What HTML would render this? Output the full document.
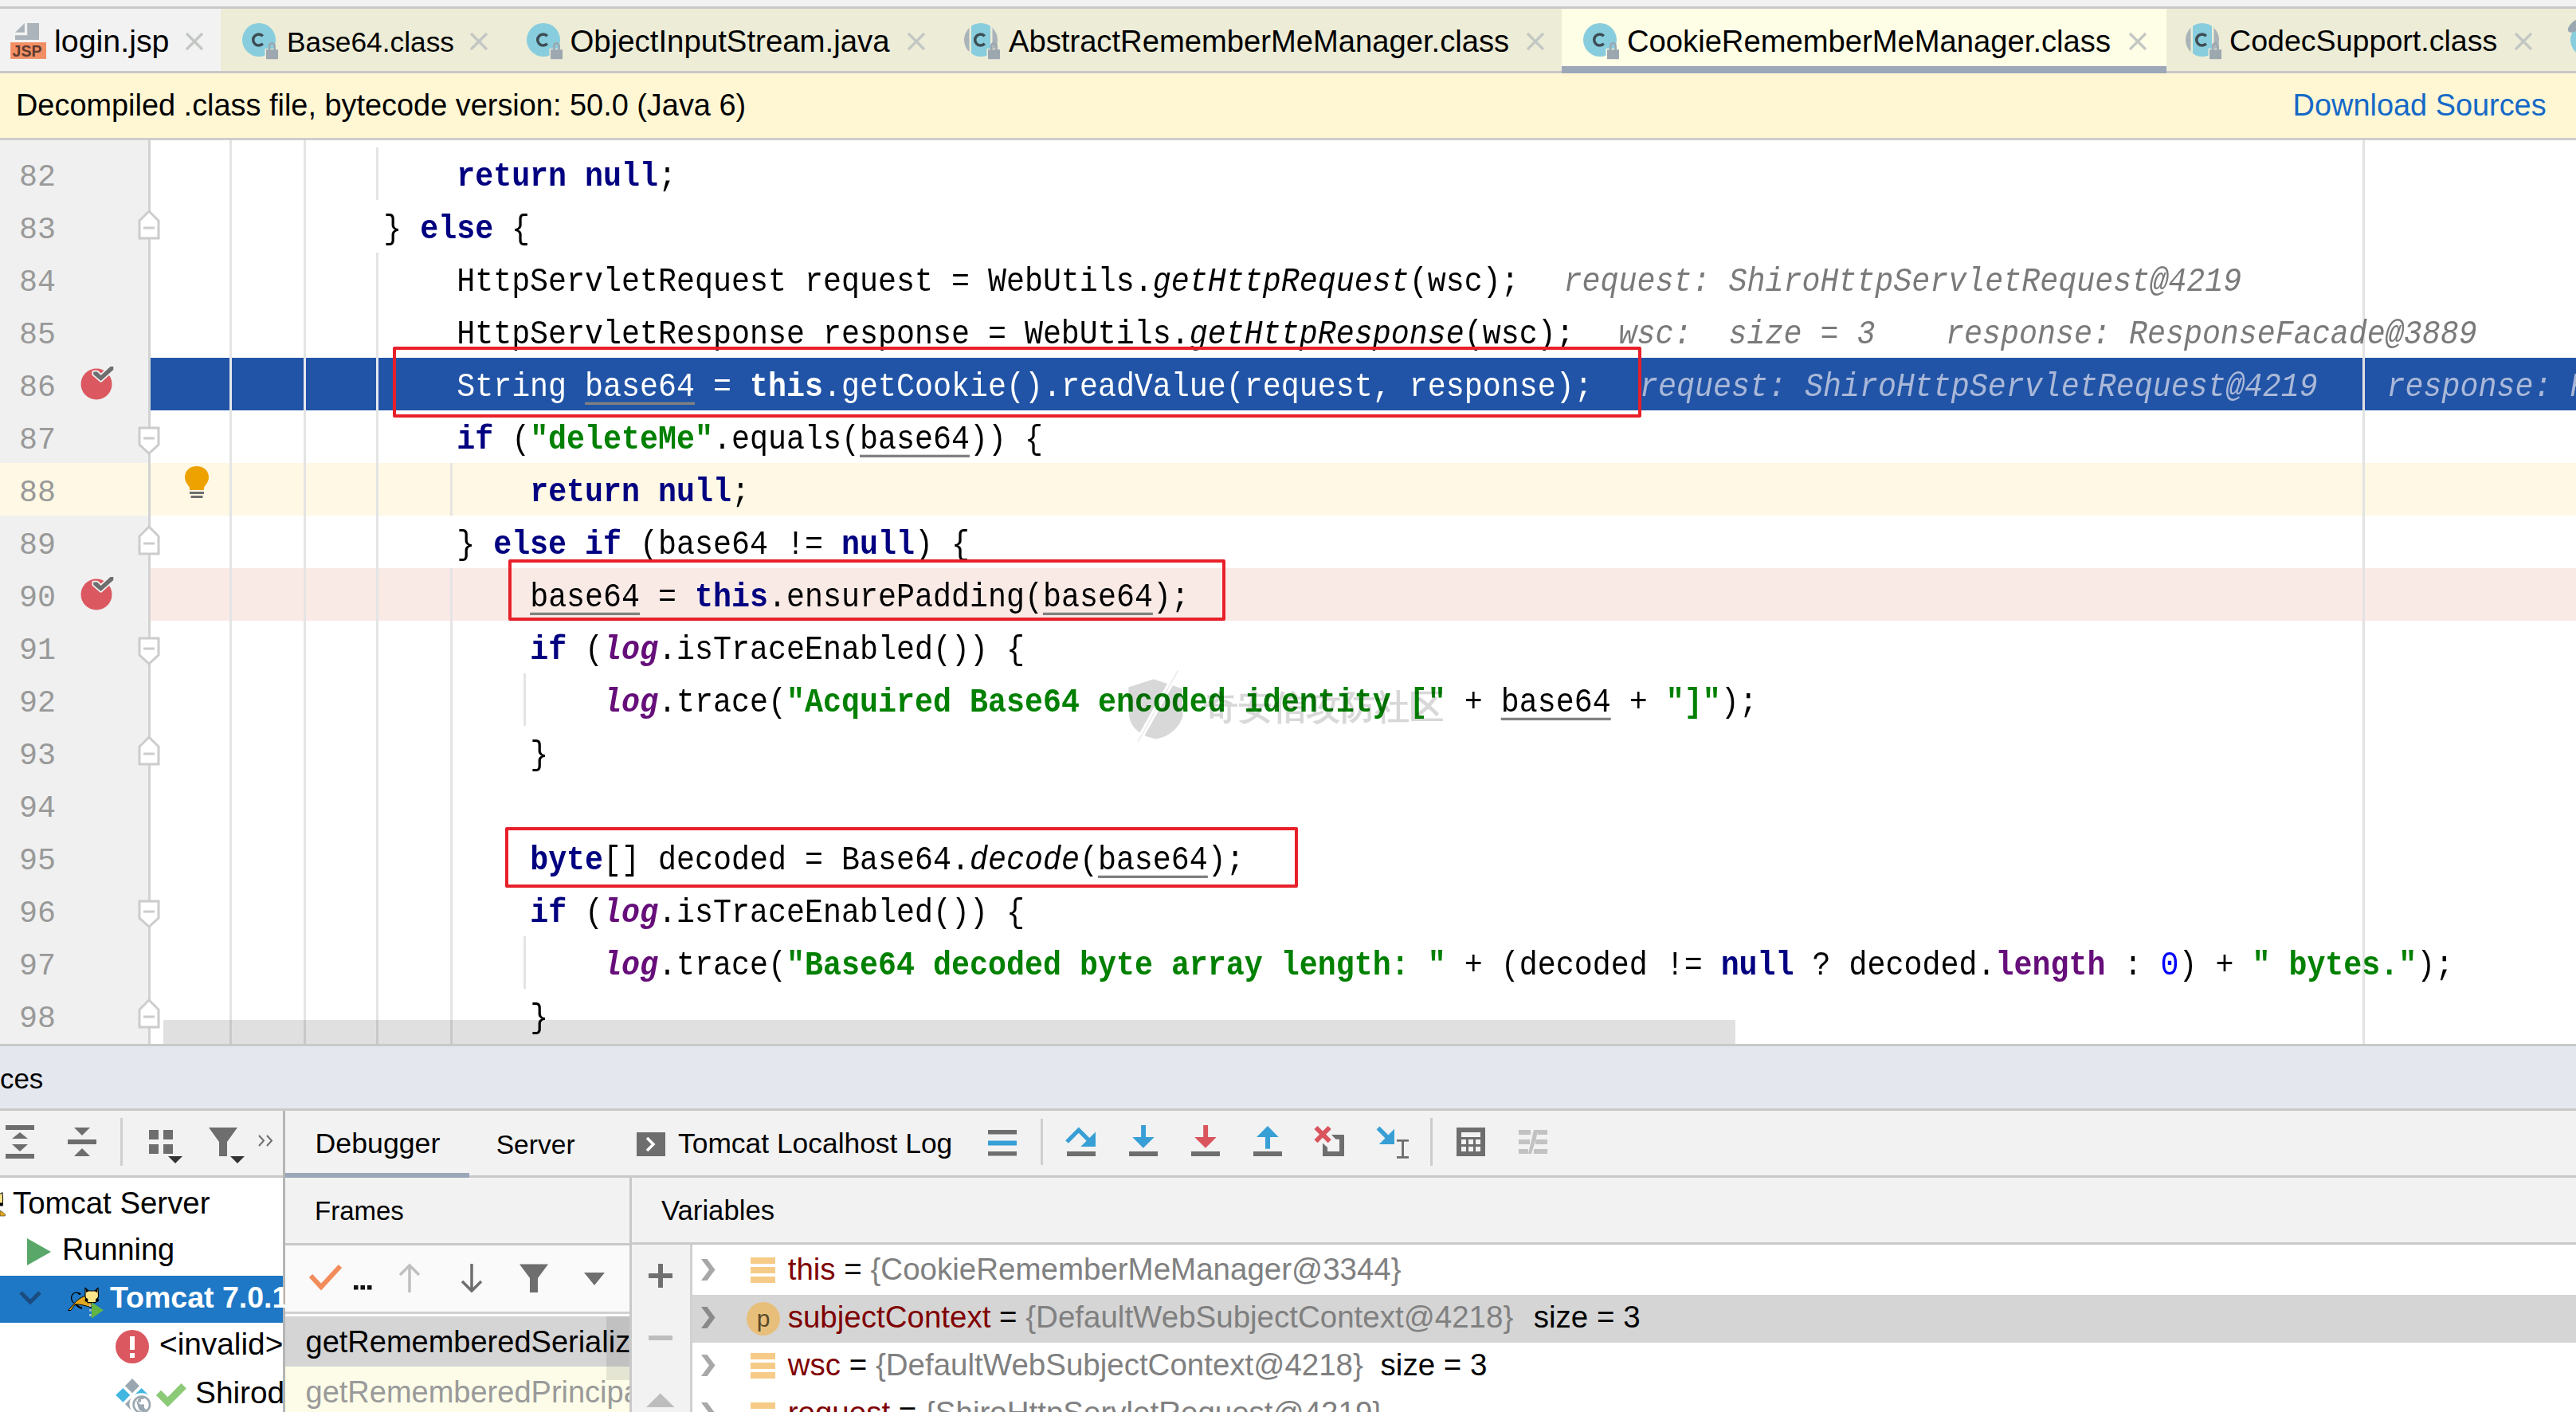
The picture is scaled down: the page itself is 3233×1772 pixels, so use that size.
<!DOCTYPE html>
<html><head><meta charset="utf-8"><title>IDE</title><style>
*{margin:0;padding:0;box-sizing:border-box}
html,body{width:3233px;height:1772px;overflow:hidden;background:#f2f2f2}
body{position:relative;font-family:"Liberation Sans",sans-serif;color:#000}
div,span.a,svg{position:absolute}
.m{font-family:"Liberation Mono",monospace;font-size:38.328px;line-height:66px;white-space:pre;height:66px}
.cl{transform:scaleY(1.1);transform-origin:0 43px}
.k{color:#000080;font-weight:bold}
.s{color:#008000;font-weight:bold}
.p{color:#660e7a;font-weight:bold;font-style:italic}
.i{font-style:italic}
.u{text-decoration:underline;text-decoration-color:#808080;text-underline-offset:7px;text-decoration-thickness:3px}
.n{color:#0000ff}
.h{color:#7a7a7a;font-style:italic}
.hb{color:#aab8d8;font-style:italic}
.ui{white-space:pre;line-height:1}
</style></head>
<body>
<div style="left:0px;top:0px;width:3233px;height:8px;background:#f2f2f2;"></div>
<div style="left:0px;top:8px;width:3233px;height:3px;background:#c8c8c8;"></div>
<div style="left:0px;top:11px;width:3233px;height:78px;background:#ececd7;"></div>
<div style="left:0px;top:11px;width:277px;height:78px;background:#f2f2f2;"></div>
<div style="left:0px;top:89px;width:3233px;height:3px;background:#c8c8c8;"></div>
<div style="left:1960px;top:11px;width:759px;height:72px;background:#fefee6;"></div>
<div style="left:1960px;top:83px;width:759px;height:9px;background:#9ca7b8;"></div>
<svg style="left:0;top:0" width="70" height="90" viewBox="0 0 70 90"><path d="M34.2 29.1 H49 V49.9 H19 V44.25 H34.2 Z" fill="#abb4ba"/><path d="M19 40.85 L30.9 29.1 V40.85 Z" fill="#abb4ba"/><rect x="13.1" y="53.1" width="44.9" height="20.8" fill="#f18e64"/><text x="34" y="70.8" font-family="Liberation Sans" font-weight="bold" font-size="19.5" fill="#5e3b2e" text-anchor="middle">JSP</text></svg>
<div class="ui" style="left:68px;top:31.6px;font-size:39.4px;color:#000;font-weight:normal;">login.jsp</div>
<svg style="left:232px;top:40px" width="24" height="24" viewBox="0 0 24 24"><path d="M2 2L22 22M22 2L2 22" stroke="#c3c7c3" stroke-width="3.2"/></svg>
<svg style="left:301px;top:26px" width="52" height="52" viewBox="0 0 52 52"><circle cx="24" cy="24" r="21" fill="#88cddd"/><path d="M28.8 19.2 A7 7 0 1 0 28.8 28.8" fill="none" stroke="#3e4d54" stroke-width="3.5"/><rect x="31.5" y="35" width="18" height="15" fill="#ececd7"/><rect x="33" y="36.2" width="15" height="12" fill="#9ca7b0"/><path d="M37.2 37 V31.5 a3.2 3.2 0 0 1 6.4 0 V37" fill="none" stroke="#9ca7b0" stroke-width="2.6"/></svg>
<div class="ui" style="left:360px;top:35.1px;font-size:35.3px;color:#000;font-weight:normal;">Base64.class</div>
<svg style="left:589px;top:40px" width="24" height="24" viewBox="0 0 24 24"><path d="M2 2L22 22M22 2L2 22" stroke="#c3c7c3" stroke-width="3.2"/></svg>
<svg style="left:658px;top:26px" width="52" height="52" viewBox="0 0 52 52"><circle cx="24" cy="24" r="21" fill="#88cddd"/><path d="M28.8 19.2 A7 7 0 1 0 28.8 28.8" fill="none" stroke="#3e4d54" stroke-width="3.5"/><rect x="31.5" y="35" width="18" height="15" fill="#ececd7"/><rect x="33" y="36.2" width="15" height="12" fill="#9ca7b0"/><path d="M37.2 37 V31.5 a3.2 3.2 0 0 1 6.4 0 V37" fill="none" stroke="#9ca7b0" stroke-width="2.6"/></svg>
<div class="ui" style="left:715.5px;top:32.5px;font-size:38.4px;color:#000;font-weight:normal;">ObjectInputStream.java</div>
<svg style="left:1138px;top:40px" width="24" height="24" viewBox="0 0 24 24"><path d="M2 2L22 22M22 2L2 22" stroke="#c3c7c3" stroke-width="3.2"/></svg>
<svg style="left:1207px;top:26px" width="52" height="52" viewBox="0 0 52 52"><defs><clipPath id="cc"><circle cx="24" cy="24" r="21"/></clipPath></defs><g clip-path="url(#cc)"><rect x="0" y="0" width="9.5" height="48" fill="#aab3b8"/><rect x="38.5" y="0" width="12" height="48" fill="#aab3b8"/><rect x="12" y="0" width="24" height="48" fill="#88cddd"/></g><path d="M28.8 19.2 A7 7 0 1 0 28.8 28.8" fill="none" stroke="#3e4d54" stroke-width="3.5"/><rect x="31.5" y="35" width="18" height="15" fill="#ececd7"/><rect x="33" y="36.2" width="15" height="12" fill="#9ca7b0"/><path d="M37.2 37 V31.5 a3.2 3.2 0 0 1 6.4 0 V37" fill="none" stroke="#9ca7b0" stroke-width="2.6"/></svg>
<div class="ui" style="left:1266px;top:32.7px;font-size:38.2px;color:#000;font-weight:normal;">AbstractRememberMeManager.class</div>
<svg style="left:1915px;top:40px" width="24" height="24" viewBox="0 0 24 24"><path d="M2 2L22 22M22 2L2 22" stroke="#c3c7c3" stroke-width="3.2"/></svg>
<svg style="left:1984px;top:26px" width="52" height="52" viewBox="0 0 52 52"><circle cx="24" cy="24" r="21" fill="#88cddd"/><path d="M28.8 19.2 A7 7 0 1 0 28.8 28.8" fill="none" stroke="#3e4d54" stroke-width="3.5"/><rect x="31.5" y="35" width="18" height="15" fill="#fefee6"/><rect x="33" y="36.2" width="15" height="12" fill="#9ca7b0"/><path d="M37.2 37 V31.5 a3.2 3.2 0 0 1 6.4 0 V37" fill="none" stroke="#9ca7b0" stroke-width="2.6"/></svg>
<div class="ui" style="left:2042px;top:32.7px;font-size:38.2px;color:#000;font-weight:normal;">CookieRememberMeManager.class</div>
<svg style="left:2671px;top:40px" width="24" height="24" viewBox="0 0 24 24"><path d="M2 2L22 22M22 2L2 22" stroke="#c3c7c3" stroke-width="3.2"/></svg>
<svg style="left:2740px;top:26px" width="52" height="52" viewBox="0 0 52 52"><defs><clipPath id="cc"><circle cx="24" cy="24" r="21"/></clipPath></defs><g clip-path="url(#cc)"><rect x="0" y="0" width="9.5" height="48" fill="#aab3b8"/><rect x="38.5" y="0" width="12" height="48" fill="#aab3b8"/><rect x="12" y="0" width="24" height="48" fill="#88cddd"/></g><path d="M28.8 19.2 A7 7 0 1 0 28.8 28.8" fill="none" stroke="#3e4d54" stroke-width="3.5"/><rect x="31.5" y="35" width="18" height="15" fill="#ececd7"/><rect x="33" y="36.2" width="15" height="12" fill="#9ca7b0"/><path d="M37.2 37 V31.5 a3.2 3.2 0 0 1 6.4 0 V37" fill="none" stroke="#9ca7b0" stroke-width="2.6"/></svg>
<div class="ui" style="left:2798px;top:33.2px;font-size:37.6px;color:#000;font-weight:normal;">CodecSupport.class</div>
<svg style="left:3155px;top:40px" width="24" height="24" viewBox="0 0 24 24"><path d="M2 2L22 22M22 2L2 22" stroke="#c3c7c3" stroke-width="3.2"/></svg>
<svg style="left:3215px;top:20px" width="18" height="50" viewBox="3215 20 18 50"><circle cx="3247" cy="50" r="21" fill="#88cddd"/><ellipse cx="3233" cy="32" rx="12" ry="6" transform="rotate(-38 3233 32)" fill="#9aa7b0"/><path d="M3221 40 C3226 35 3233 33 3240 34" fill="none" stroke="#ececd7" stroke-width="0"/></svg>
<div style="left:0px;top:92px;width:3233px;height:81px;background:#fff7d4;"></div>
<div style="left:0px;top:173px;width:3233px;height:3px;background:#cdcdcd;"></div>
<div class="ui" style="left:20px;top:113.9px;font-size:37.9px;color:#000;font-weight:normal;">Decompiled .class file, bytecode version: 50.0 (Java 6)</div>
<div class="ui" style="left:2877.6px;top:113.9px;font-size:37.9px;color:#1569c7;font-weight:normal;">Download Sources</div>
<div style="left:0px;top:176px;width:3233px;height:1134px;background:#ffffff;"></div>
<div style="left:0px;top:176px;width:187px;height:1134px;background:#f0f0f0;"></div>
<div style="left:0px;top:581px;width:3233px;height:66px;background:#fef8e4;"></div>
<div style="left:189px;top:449px;width:3044px;height:66px;background:#2154a6;"></div>
<div style="left:189px;top:713px;width:3044px;height:66px;background:#faeae6;"></div>
<div style="left:287.5px;top:176px;width:3px;height:1134px;background:#e4e4e4;"></div>
<div style="left:380.5px;top:176px;width:3px;height:1134px;background:#e4e4e4;"></div>
<div style="left:471.5px;top:185px;width:3px;height:66px;background:#e4e4e4;"></div>
<div style="left:471.5px;top:317px;width:3px;height:993px;background:#e4e4e4;"></div>
<div style="left:564.5px;top:581px;width:3px;height:66px;background:#e4e4e4;"></div>
<div style="left:564.5px;top:713px;width:3px;height:597px;background:#e4e4e4;"></div>
<div style="left:656.5px;top:845px;width:3px;height:66px;background:#e4e4e4;"></div>
<div style="left:656.5px;top:1175px;width:3px;height:66px;background:#e4e4e4;"></div>
<div style="left:2965px;top:176px;width:3px;height:1134px;background:#e2e2e2;"></div>
<div style="left:186px;top:176px;width:3px;height:1134px;background:#d2d2d2;"></div>
<div class="m" style="left:24px;top:189.8px;color:#999999;width:46px;text-align:right">82</div>
<div class="m" style="left:24px;top:255.8px;color:#999999;width:46px;text-align:right">83</div>
<div class="m" style="left:24px;top:321.8px;color:#999999;width:46px;text-align:right">84</div>
<div class="m" style="left:24px;top:387.8px;color:#999999;width:46px;text-align:right">85</div>
<div class="m" style="left:24px;top:453.8px;color:#999999;width:46px;text-align:right">86</div>
<div class="m" style="left:24px;top:519.8px;color:#999999;width:46px;text-align:right">87</div>
<div class="m" style="left:24px;top:585.8px;color:#999999;width:46px;text-align:right">88</div>
<div class="m" style="left:24px;top:651.8px;color:#999999;width:46px;text-align:right">89</div>
<div class="m" style="left:24px;top:717.8px;color:#999999;width:46px;text-align:right">90</div>
<div class="m" style="left:24px;top:783.8px;color:#999999;width:46px;text-align:right">91</div>
<div class="m" style="left:24px;top:849.8px;color:#999999;width:46px;text-align:right">92</div>
<div class="m" style="left:24px;top:915.8px;color:#999999;width:46px;text-align:right">93</div>
<div class="m" style="left:24px;top:981.8px;color:#999999;width:46px;text-align:right">94</div>
<div class="m" style="left:24px;top:1047.8px;color:#999999;width:46px;text-align:right">95</div>
<div class="m" style="left:24px;top:1113.8px;color:#999999;width:46px;text-align:right">96</div>
<div class="m" style="left:24px;top:1179.8px;color:#999999;width:46px;text-align:right">97</div>
<div class="m" style="left:24px;top:1245.8px;color:#999999;width:46px;text-align:right">98</div>
<svg style="left:0;top:0;width:3233px;height:1772px;pointer-events:none" width="3233" height="1772"><path d="M187 265.0 L199 277.0 V299.0 H175 V277.0 Z" fill="#ffffff" stroke="#cccccc" stroke-width="3"/><rect x="180" y="284.5" width="14" height="3" fill="#cccccc"/></svg>
<svg style="left:0;top:0;width:3233px;height:1772px;pointer-events:none" width="3233" height="1772"><path d="M175 537.0 H199 V558.0 L187 569.0 L175 558.0 Z" fill="#ffffff" stroke="#cccccc" stroke-width="3"/><rect x="180" y="548.5" width="14" height="3" fill="#cccccc"/></svg>
<svg style="left:0;top:0;width:3233px;height:1772px;pointer-events:none" width="3233" height="1772"><path d="M187 661.0 L199 673.0 V695.0 H175 V673.0 Z" fill="#ffffff" stroke="#cccccc" stroke-width="3"/><rect x="180" y="680.5" width="14" height="3" fill="#cccccc"/></svg>
<svg style="left:0;top:0;width:3233px;height:1772px;pointer-events:none" width="3233" height="1772"><path d="M175 801.0 H199 V822.0 L187 833.0 L175 822.0 Z" fill="#ffffff" stroke="#cccccc" stroke-width="3"/><rect x="180" y="812.5" width="14" height="3" fill="#cccccc"/></svg>
<svg style="left:0;top:0;width:3233px;height:1772px;pointer-events:none" width="3233" height="1772"><path d="M187 925.0 L199 937.0 V959.0 H175 V937.0 Z" fill="#ffffff" stroke="#cccccc" stroke-width="3"/><rect x="180" y="944.5" width="14" height="3" fill="#cccccc"/></svg>
<svg style="left:0;top:0;width:3233px;height:1772px;pointer-events:none" width="3233" height="1772"><path d="M175 1131.0 H199 V1152.0 L187 1163.0 L175 1152.0 Z" fill="#ffffff" stroke="#cccccc" stroke-width="3"/><rect x="180" y="1142.5" width="14" height="3" fill="#cccccc"/></svg>
<svg style="left:0;top:0;width:3233px;height:1772px;pointer-events:none" width="3233" height="1772"><path d="M187 1255.0 L199 1267.0 V1289.0 H175 V1267.0 Z" fill="#ffffff" stroke="#cccccc" stroke-width="3"/><rect x="180" y="1274.5" width="14" height="3" fill="#cccccc"/></svg>
<svg style="left:96px;top:455px" width="52" height="52" viewBox="0 0 52 52"><circle cx="25" cy="27" r="19.5" fill="#db5860"/><path d="M21.2 11.5 H26 L30.6 16 L42.5 5 H46.3 V9 L30.6 23 L21.2 15Z" fill="#6e6e6e" stroke="#f3f3f3" stroke-width="3.5" stroke-linejoin="round"/><path d="M21.2 11.5 H26 L30.6 16 L42.5 5 H46.3 V9 L30.6 23 L21.2 15Z" fill="#6e6e6e"/></svg>
<svg style="left:96px;top:719px" width="52" height="52" viewBox="0 0 52 52"><circle cx="25" cy="27" r="19.5" fill="#db5860"/><path d="M21.2 11.5 H26 L30.6 16 L42.5 5 H46.3 V9 L30.6 23 L21.2 15Z" fill="#6e6e6e" stroke="#f3f3f3" stroke-width="3.5" stroke-linejoin="round"/><path d="M21.2 11.5 H26 L30.6 16 L42.5 5 H46.3 V9 L30.6 23 L21.2 15Z" fill="#6e6e6e"/></svg>
<svg style="left:231px;top:584px" width="34" height="46" viewBox="0 0 34 46"><path d="M16 1 C7 1 1 7 1 15 C1 21 5 24 7 28 V31 H25 V28 C27 24 31 21 31 15 C31 7 25 1 16 1Z" fill="#eda200"/><rect x="7" y="33" width="18" height="3" fill="#6e6e6e"/><rect x="8.5" y="38" width="15" height="3" fill="#6e6e6e"/></svg>
<div class="m cl" style="left:573.16px;top:189.8px;color:#000"><span class="k">return</span> <span class="k">null</span>;</div>
<div class="m cl" style="left:481.18px;top:255.8px;color:#000">} <span class="k">else</span> {</div>
<div class="m cl" style="left:573.16px;top:321.8px;color:#000">HttpServletRequest request = WebUtils.<span class="i">getHttpRequest</span>(wsc);</div>
<div class="m cl h" style="left:1962.5px;top:321.8px">request: ShiroHttpServletRequest@4219</div>
<div class="m cl" style="left:573.16px;top:387.8px;color:#000">HttpServletResponse response = WebUtils.<span class="i">getHttpResponse</span>(wsc);</div>
<div class="m cl h" style="left:2031.5px;top:387.8px">wsc:  size = 3</div>
<div class="m cl h" style="left:2442px;top:387.8px">response: ResponseFacade@3889</div>
<div class="m cl" style="left:573.16px;top:453.8px;color:#ffffff">String <span class="u">base64</span> = <span style="font-weight:bold">this</span>.getCookie().readValue(request, response);</div>
<div class="m cl hb" style="left:2058px;top:453.8px">request: ShiroHttpServletRequest@4219</div>
<div class="m cl hb" style="left:2995.5px;top:453.8px">response: ResponseFacade@3889</div>
<div class="m cl" style="left:573.16px;top:519.8px;color:#000"><span class="k">if</span> (<span class="s">"deleteMe"</span>.equals(<span class="u">base64</span>)) {</div>
<div class="m cl" style="left:665.15px;top:585.8px;color:#000"><span class="k">return</span> <span class="k">null</span>;</div>
<div class="m cl" style="left:573.16px;top:651.8px;color:#000">} <span class="k">else</span> <span class="k">if</span> (<span class="u">base64</span> != <span class="k">null</span>) {</div>
<div class="m cl" style="left:665.15px;top:717.8px;color:#000"><span class="u">base64</span> = <span class="k">this</span>.ensurePadding(<span class="u">base64</span>);</div>
<div class="m cl" style="left:665.15px;top:783.8px;color:#000"><span class="k">if</span> (<span class="p">log</span>.isTraceEnabled()) {</div>
<div class="m cl" style="left:757.14px;top:849.8px;color:#000"><span class="p">log</span>.trace(<span class="s">"Acquired Base64 encoded identity ["</span> + <span class="u">base64</span> + <span class="s">"]"</span>);</div>
<div class="m cl" style="left:665.15px;top:915.8px;color:#000">}</div>
<div class="m cl" style="left:665.15px;top:1047.8px;color:#000"><span class="k">byte</span>[] decoded = Base64.<span class="i">decode</span>(<span class="u">base64</span>);</div>
<div class="m cl" style="left:665.15px;top:1113.8px;color:#000"><span class="k">if</span> (<span class="p">log</span>.isTraceEnabled()) {</div>
<div class="m cl" style="left:757.14px;top:1179.8px;color:#000"><span class="p">log</span>.trace(<span class="s">"Base64 decoded byte array length: "</span> + (decoded != <span class="k">null</span> ? decoded.<span class="p" style="font-style:normal">length</span> : <span class="n">0</span>) + <span class="s">" bytes."</span>);</div>
<div class="m cl" style="left:665.15px;top:1245.8px;color:#000">}</div>
<div style="left:287.5px;top:449px;width:3px;height:66px;background:#e6e8ee;"></div>
<div style="left:380.5px;top:449px;width:3px;height:66px;background:#e6e8ee;"></div>
<div style="left:471.5px;top:449px;width:3px;height:66px;background:#e6e8ee;"></div>
<div style="left:2965px;top:449px;width:3px;height:66px;background:#e2e2e2;"></div>
<svg style="left:1405px;top:835px" width="430" height="110" viewBox="0 0 430 110"><defs><mask id="wm"><rect width="430" height="110" fill="#fff"/><path d="M73.6 6.1 L23.2 95.8" stroke="#000" stroke-width="7"/></mask></defs><path d="M11.2 27.5 L42.8 17.2 L78.7 29.2 L79.5 63.3 C75 80 60 90 46.2 92.4 C30 90 14 80 12.1 63.3Z" fill="#000" opacity="0.15" mask="url(#wm)"/><path d="M73.6 6.1 L23.2 95.8" stroke="#000" stroke-width="1.5" opacity="0.08"/><text x="106" y="67" font-size="43" font-weight="bold" fill="#000" opacity="0.15">&#22855;&#23433;&#20449;&#25915;&#38450;&#31038;&#21306;</text></svg>
<div style="left:492.5px;top:435px;width:1567.5px;height:88.5px;border:4px solid #e8202a;border-radius:2px"></div>
<div style="left:638px;top:702px;width:900px;height:77px;border:4px solid #e8202a;border-radius:2px"></div>
<div style="left:633.5px;top:1037.5px;width:995.5px;height:76.5px;border:4px solid #e8202a;border-radius:2px"></div>
<div style="left:205px;top:1280px;width:1973px;height:30px;background:rgba(0,0,0,0.12);"></div>
<div style="left:0px;top:1310px;width:3233px;height:3px;background:#c9c9c9;"></div>
<div style="left:0px;top:1313px;width:3233px;height:78px;background:#e4e7ee;"></div>
<div class="ui" style="left:0px;top:1336.5px;font-size:34.9px;color:#000;font-weight:normal;">ces</div>
<div style="left:0px;top:1391px;width:3233px;height:3px;background:#c9c9c9;"></div>
<div style="left:0px;top:1394px;width:3233px;height:81px;background:#f2f2f2;"></div>
<div style="left:0px;top:1475px;width:3233px;height:3px;background:#c9c9c9;"></div>
<svg style="left:0;top:1394px" width="356" height="81" viewBox="0 1394 356 81"><rect x="7" y="1412" width="36" height="6" fill="#6e6e6e"/><rect x="7" y="1448" width="36" height="6" fill="#6e6e6e"/><path d="M25 1421 L35 1429 H15Z" fill="#6e6e6e"/><path d="M25 1445 L35 1436 H15Z" fill="#6e6e6e"/><rect x="85" y="1430" width="36" height="6" fill="#6e6e6e"/><path d="M93 1415 H113 L103 1425Z" fill="#6e6e6e"/><path d="M93 1451 H113 L103 1441Z" fill="#6e6e6e"/><rect x="151" y="1403" width="3" height="60" fill="#cfcfcf"/><rect x="187" y="1418" width="12" height="12" fill="#6e6e6e"/><rect x="205" y="1418" width="12" height="12" fill="#6e6e6e"/><rect x="187" y="1436" width="12" height="12" fill="#6e6e6e"/><rect x="205" y="1436" width="12" height="12" fill="#6e6e6e"/><path d="M211 1451 H229 L220 1460Z" fill="#333"/><path d="M262 1415 H298 L285 1433 V1451 H275 V1433Z" fill="#6e6e6e"/><path d="M289 1451 H307 L298 1460Z" fill="#333"/><path d="M325 1425 L331 1431.5 L325 1438 M335 1425 L341 1431.5 L335 1438" fill="none" stroke="#6e6e6e" stroke-width="2"/></svg>
<div style="left:355px;top:1394px;width:3px;height:378px;background:#b5b5b5;"></div>
<div class="ui" style="left:395.6px;top:1417.8px;font-size:35.7px;color:#000;font-weight:normal;">Debugger</div>
<div style="left:358px;top:1472px;width:231px;height:6px;background:#9aa7b9;"></div>
<div class="ui" style="left:622.7px;top:1419.6px;font-size:33.6px;color:#000;font-weight:normal;">Server</div>
<svg style="left:799px;top:1421px" width="36" height="30" viewBox="0 0 36 30"><rect width="36" height="30" fill="#6e6e6e"/><path d="M13 7 L21 15 L13 23" fill="none" stroke="#fff" stroke-width="3.5"/></svg>
<div class="ui" style="left:851px;top:1418.0px;font-size:35.4px;color:#000;font-weight:normal;">Tomcat Localhost Log</div>
<svg style="left:1230px;top:1394px" width="730" height="81" viewBox="1230 1394 730 81"><rect x="1240" y="1418" width="36" height="5.5" fill="#6e6e6e"/><rect x="1240" y="1431.5" width="36" height="6" fill="#389fd6"/><rect x="1240" y="1445" width="36" height="5.5" fill="#6e6e6e"/><rect x="1306" y="1404" width="3" height="58" fill="#cfcfcf"/><rect x="1339" y="1445" width="36" height="6" fill="#6e6e6e"/><path d="M1339 1433 L1353.8 1418.2 L1366 1430.4" fill="none" stroke="#389fd6" stroke-width="5.2"/><path d="M1375 1420.4 V1439 H1356.3Z" fill="#389fd6"/><rect x="1417" y="1445" width="36" height="6" fill="#6e6e6e"/><rect x="1432.1" y="1412" width="5.9" height="16" fill="#389fd6"/><path d="M1421.1 1427 H1448.7 L1434.9 1440.8Z" fill="#389fd6"/><rect x="1495" y="1445" width="36" height="6" fill="#6e6e6e"/><rect x="1510.2" y="1412" width="5.9" height="16" fill="#d9545d"/><path d="M1499.1 1427 H1526.7 L1513 1440.8Z" fill="#d9545d"/><rect x="1573" y="1445" width="36" height="6" fill="#6e6e6e"/><rect x="1588" y="1426" width="6" height="15.7" fill="#389fd6"/><path d="M1577.1 1427 H1604.7 L1591 1413Z" fill="#389fd6"/><path d="M1671 1424 H1687 V1451 H1660 V1434.6 L1666.1 1440 V1445 H1681 V1429.7 H1676.5Z" fill="#6e6e6e"/><path d="M1651.5 1415 L1668.7 1432.2 M1668.7 1415 L1651.5 1432.2" stroke="#d9545d" stroke-width="5.8"/><path d="M1729.5 1415.5 L1742 1428" stroke="#389fd6" stroke-width="5.5"/><path d="M1750 1416.7 V1436.1 H1730.8Z" fill="#389fd6"/><rect x="1753" y="1430" width="15" height="2.7" fill="#6e6e6e"/><rect x="1753" y="1451" width="15" height="2.8" fill="#6e6e6e"/><rect x="1759.1" y="1430" width="2.9" height="23" fill="#6e6e6e"/><rect x="1795" y="1403" width="3" height="60" fill="#cccccc"/><rect x="1828" y="1415" width="36" height="36" fill="#6e6e6e"/><rect x="1834" y="1421" width="24" height="6" fill="#f2f2f2"/><rect x="1834" y="1430" width="6" height="6" fill="#f2f2f2"/><rect x="1843" y="1430" width="6" height="6" fill="#f2f2f2"/><rect x="1852" y="1430" width="6" height="6" fill="#f2f2f2"/><rect x="1834" y="1439" width="6" height="6" fill="#f2f2f2"/><rect x="1843" y="1439" width="6" height="6" fill="#f2f2f2"/><rect x="1852" y="1439" width="6" height="6" fill="#f2f2f2"/><g fill="#c2c2c2"><rect x="1906" y="1418" width="15" height="6"/><rect x="1906" y="1430" width="14" height="6"/><rect x="1906" y="1442" width="12" height="6"/><rect x="1930" y="1418" width="12" height="6"/><rect x="1927" y="1430" width="15" height="6"/><rect x="1925" y="1442" width="17" height="6"/><path d="M1925 1418 H1931 L1922 1448 H1918Z"/></g></svg>
<div style="left:0px;top:1478px;width:355px;height:294px;background:#ffffff;"></div>
<svg style="left:0;top:1490px" width="12" height="40" viewBox="0 0 12 40"><path d="M-1 9 L3 6.5 L3.6 15 L3.2 21 H-1Z" fill="#fde68a" stroke="#000" stroke-width="1"/><rect x="0" y="19.5" width="3.8" height="4" fill="#000"/><path d="M0 29.5 L2 30 L6.8 34 L6.2 36 H0Z" fill="#e0a820" stroke="#333" stroke-width="0.6"/></svg>
<div class="ui" style="left:16px;top:1490.5px;font-size:38.4px;color:#000;font-weight:normal;">Tomcat Server</div>
<svg style="left:34px;top:1554px" width="32" height="34" viewBox="0 0 32 34"><path d="M0 0 L30 17 L0 34Z" fill="#59a869"/></svg>
<div class="ui" style="left:78px;top:1549.9px;font-size:37.9px;color:#000;font-weight:normal;">Running</div>
<div style="left:0px;top:1601px;width:355px;height:59px;background:#1f78c5;"></div>
<svg style="left:24px;top:1620px" width="28" height="18" viewBox="0 0 28 18"><path d="M2 2 L14 14 L26 2" fill="none" stroke="#1b4c80" stroke-width="5"/></svg>
<svg style="left:80px;top:1605px" width="60" height="55" viewBox="0 0 60 55"><path d="M12.5 30 C8 26 9 19 14 17.5 C17 16.5 20 18 21.5 19" fill="none" stroke="#000" stroke-width="1.3"/><path d="M17 17.5 L22 19 L19 20Z" fill="#000"/><path d="M5.5 39.5 L13 31 C18 25 24 22 28 21 L35 30 L34.5 36 C28 33.5 20 31.5 14 32 L9 39.5Z" fill="#e0a820" stroke="#000" stroke-width="1"/><path d="M15 32 C17 34 20 36 23 37" fill="none" stroke="#000" stroke-width="2.2"/><path d="M27 11.5 L31 15 H39 L43 11.5 L43.6 22 L40 29.6 H30 L26.9 22Z" fill="#fde68a" stroke="#000" stroke-width="1.2"/><path d="M27.5 12 L31 15.5 L28 17Z M42.5 12 L39 15.5 L42 17Z" fill="#000"/><ellipse cx="28.5" cy="26.5" rx="2" ry="2.2" fill="#000"/><ellipse cx="42" cy="26.5" rx="2" ry="2.2" fill="#000"/><rect x="32" y="32.3" width="2.7" height="2.4" fill="#b7c3d0"/><rect x="32" y="38.2" width="2.7" height="2.4" fill="#b7c3d0"/><rect x="32" y="44" width="2.7" height="2.6" fill="#b7c3d0"/><path d="M35 29.2 V49.5 L49.9 39.3Z" fill="#62b543"/></svg>
<div class="ui" style="left:138px;top:1610.3px;font-size:37.5px;color:#ffffff;font-weight:bold;">Tomcat 7.0.1</div>
<svg style="left:145px;top:1669px" width="42" height="42" viewBox="0 0 42 42"><circle cx="21" cy="21" r="21" fill="#db5860"/><rect x="18" y="8" width="6" height="17" fill="#fff"/><rect x="18" y="29" width="6" height="6" fill="#fff"/></svg>
<div class="ui" style="left:200px;top:1668.2px;font-size:38.8px;color:#000;font-weight:normal;">&lt;invalid&gt;</div>
<svg style="left:140px;top:1720px" width="100" height="52" viewBox="0 0 100 52"><path d="M26 10.1 L34.9 19.2 L26 28.3 L16.9 19.2Z" fill="#9aa7b0"/><path d="M14.4 21.9 L23.3 30.7 L14.4 39.8 L5.2 30.7Z" fill="#40b6e0"/><path d="M37.6 21.9 L46.5 30.7 C41 27.5 34 27.5 28.8 30.7Z" fill="#40b6e0"/><path d="M25.5 33.5 L17 42 L25.5 51 C21.5 46 21.5 38 25.5 33.5Z" fill="#9aa7b0"/><circle cx="37.8" cy="42.7" r="10.2" fill="none" stroke="#9aa7b0" stroke-width="2.6"/><path d="M31 37 L36 42.5 H41 V47 L44 49 L40 52 L35 50 L33 45Z M41.5 33.5 L40 36 H37 V39.5 H33 V36.5 L36 33.5Z" fill="#9aa7b0"/><path d="M55.9 31 L62.1 24.8 L70.5 33.2 L87.5 16.1 L93.9 22.5 L70.5 45.8Z" fill="#8dca77"/></svg>
<div class="ui" style="left:245px;top:1729.2px;font-size:38.8px;color:#000;font-weight:normal;">Shirod</div>
<div style="left:358px;top:1478px;width:433px;height:82px;background:#f2f2f2;"></div>
<div class="ui" style="left:395px;top:1502.7px;font-size:33px;color:#000;font-weight:normal;">Frames</div>
<div style="left:358px;top:1560px;width:433px;height:3px;background:#c9c9c9;"></div>
<div style="left:358px;top:1563px;width:433px;height:83px;background:#fafafa;"></div>
<svg style="left:358px;top:1563px" width="433" height="84" viewBox="358 1563 433 84"><path d="M390 1601 L403 1615 L427 1589" fill="none" stroke="#f28c5b" stroke-width="6"/><rect x="444" y="1613" width="5.5" height="5.5" fill="#111"/><rect x="452.5" y="1613" width="5.5" height="5.5" fill="#111"/><rect x="461" y="1613" width="5.5" height="5.5" fill="#111"/><path d="M514 1622 V1589 M502 1600 L514 1588 L526 1600" fill="none" stroke="#c0c0c0" stroke-width="3.5"/><path d="M592 1586 V1619 M580 1608 L592 1620 L604 1608" fill="none" stroke="#6e6e6e" stroke-width="3.5"/><path d="M652 1586.5 H688 L675 1604 V1622 H665 V1604Z" fill="#6e6e6e"/><path d="M733 1597 H759 L746 1613Z" fill="#6e6e6e"/></svg>
<div style="left:358px;top:1646px;width:433px;height:3px;background:#d0d0d0;"></div>
<div style="left:358px;top:1649px;width:433px;height:3px;background:#ffffff;"></div>
<div style="left:358px;top:1652px;width:433px;height:62.5px;background:#d5d5d5;"></div>
<div style="left:358px;top:1714.5px;width:433px;height:58px;background:#fcfce8;"></div>
<div style="left:358px;top:1650px;width:432px;height:122px;overflow:hidden"><div class="ui" style="left:25.5px;top:14.8px;font-size:38px">getRememberedSerializedIdentity</div><div class="ui" style="left:25.5px;top:77.8px;font-size:38px;color:#9a9a9a">getRememberedPrincipals</div></div>
<div style="left:761px;top:1652px;width:29px;height:80px;background:rgba(0,0,0,0.09);"></div>
<div style="left:790px;top:1478px;width:3px;height:294px;background:#c9c9c9;"></div>
<div style="left:793px;top:1478px;width:2440px;height:82px;background:#f2f2f2;"></div>
<div class="ui" style="left:830px;top:1502.1px;font-size:34.7px;color:#000;font-weight:normal;">Variables</div>
<div style="left:793px;top:1559px;width:2440px;height:3px;background:#c9c9c9;"></div>
<div style="left:793px;top:1562px;width:73px;height:210px;background:#f2f2f2;"></div>
<svg style="left:793px;top:1562px" width="73" height="210" viewBox="793 1562 73 210"><rect x="814" y="1598" width="30" height="6" fill="#707070"/><rect x="826" y="1586" width="6" height="30" fill="#707070"/><rect x="814" y="1676" width="30" height="6" fill="#bdbdbd"/><path d="M811 1766 L828.7 1748.4 L846.5 1766Z" fill="#bdbdbd"/></svg>
<div style="left:866px;top:1562px;width:3px;height:210px;background:#d0d0d0;"></div>
<div style="left:869px;top:1562px;width:2364px;height:210px;background:#ffffff;"></div>
<div style="left:869px;top:1625px;width:2364px;height:60px;background:#d5d5d5;"></div>
<svg style="left:880px;top:1580px" width="18" height="28" viewBox="0 0 18 28"><path d="M0 0 H7.5 L17.5 13.5 L7.5 27 H0 L10 13.5Z" fill="#a8a8a8"/></svg>
<svg style="left:942px;top:1578px" width="32" height="34" viewBox="0 0 32 34"><rect x="0" y="0" width="31" height="8" fill="#f6cb88"/><rect x="0" y="12" width="31" height="8" fill="#f6cb88"/><rect x="0" y="24" width="31" height="8" fill="#f6cb88"/></svg>
<div class="ui" style="left:988.7px;top:1574.4px;font-size:38.5px"><span style="color:#7f0000">this</span> = <span style="color:#808080">{CookieRememberMeManager@3344}</span></div>
<svg style="left:880px;top:1640px" width="18" height="28" viewBox="0 0 18 28"><path d="M0 0 H7.5 L17.5 13.5 L7.5 27 H0 L10 13.5Z" fill="#8a8a8a"/></svg>
<svg style="left:937px;top:1634px" width="42" height="42" viewBox="0 0 42 42"><circle cx="21" cy="21" r="21" fill="#e8bf7a"/><text x="21" y="31" font-family="Liberation Sans" font-size="30" fill="#5a4a2a" text-anchor="middle">p</text></svg>
<div class="ui" style="left:988.7px;top:1634.4px;font-size:38.5px"><span style="color:#7f0000">subjectContext</span> = <span style="color:#808080">{DefaultWebSubjectContext@4218}</span></div>
<div class="ui" style="left:1924.8px;top:1634.4px;font-size:38.5px">size = 3</div>
<svg style="left:880px;top:1700px" width="18" height="28" viewBox="0 0 18 28"><path d="M0 0 H7.5 L17.5 13.5 L7.5 27 H0 L10 13.5Z" fill="#a8a8a8"/></svg>
<svg style="left:942px;top:1698px" width="32" height="34" viewBox="0 0 32 34"><rect x="0" y="0" width="31" height="8" fill="#f6cb88"/><rect x="0" y="12" width="31" height="8" fill="#f6cb88"/><rect x="0" y="24" width="31" height="8" fill="#f6cb88"/></svg>
<div class="ui" style="left:988.7px;top:1694.4px;font-size:38.5px"><span style="color:#7f0000">wsc</span> = <span style="color:#808080">{DefaultWebSubjectContext@4218}</span></div>
<div class="ui" style="left:1732.6px;top:1694.4px;font-size:38.5px">size = 3</div>
<svg style="left:880px;top:1760px" width="18" height="28" viewBox="0 0 18 28"><path d="M0 0 H7.5 L17.5 13.5 L7.5 27 H0 L10 13.5Z" fill="#a8a8a8"/></svg>
<svg style="left:942px;top:1760px" width="32" height="34" viewBox="0 0 32 34"><rect x="0" y="0" width="31" height="8" fill="#f6cb88"/><rect x="0" y="12" width="31" height="8" fill="#f6cb88"/><rect x="0" y="24" width="31" height="8" fill="#f6cb88"/></svg>
<div class="ui" style="left:988.7px;top:1754.4px;font-size:38.5px"><span style="color:#7f0000">request</span> = <span style="color:#808080">{ShiroHttpServletRequest@4219}</span></div>
</body></html>
